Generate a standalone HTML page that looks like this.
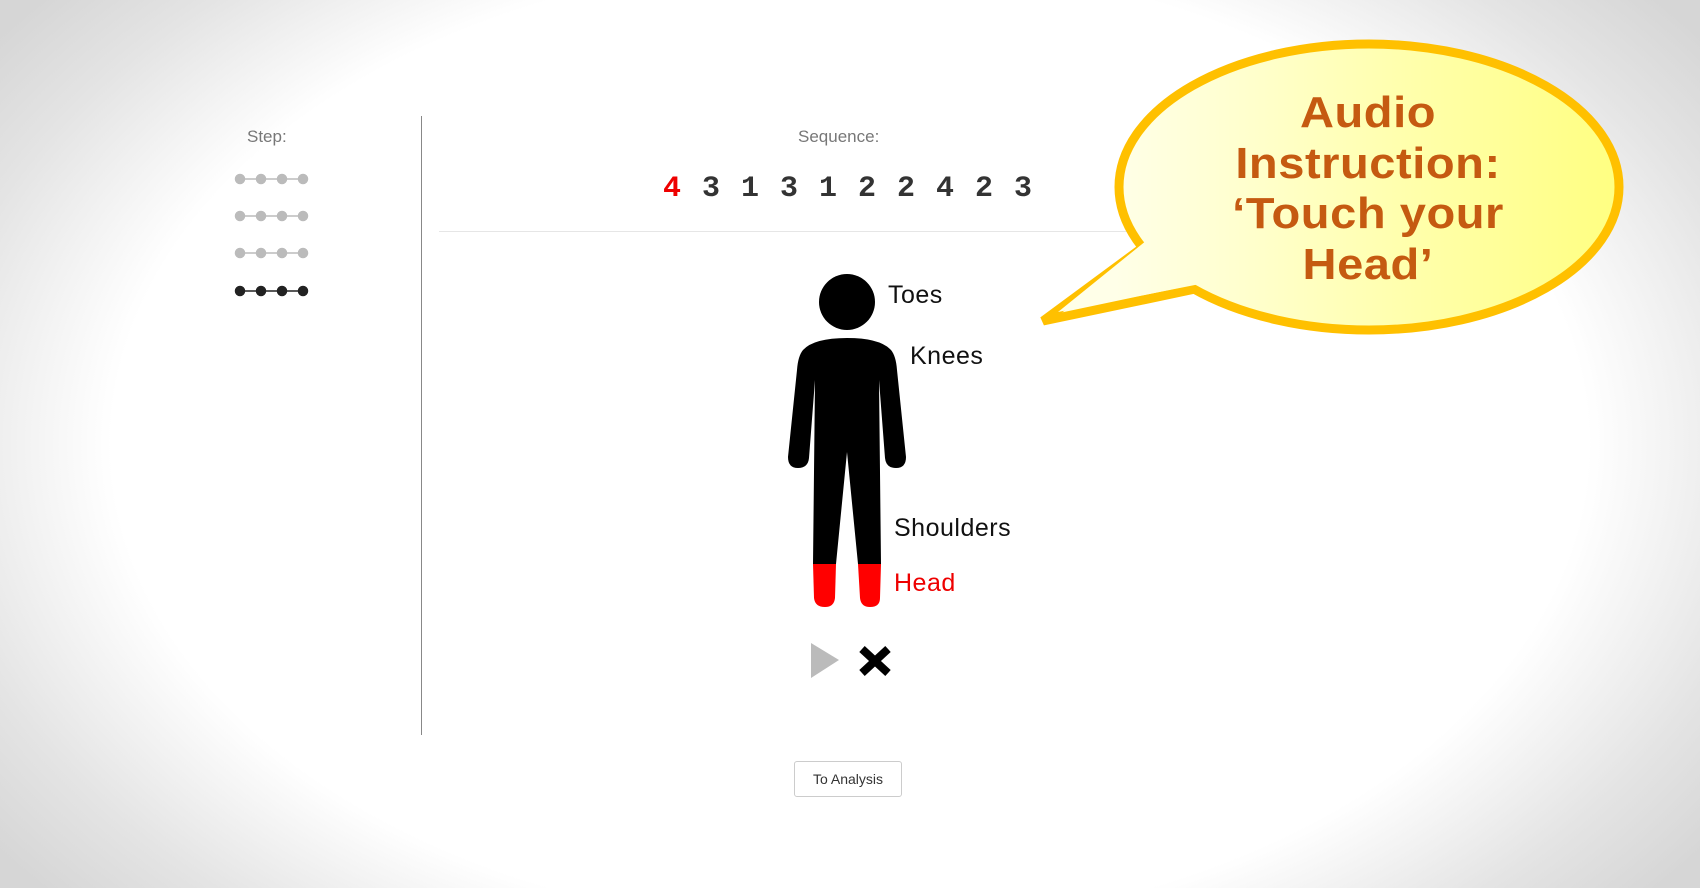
<!DOCTYPE html>
<html><head><style>
html,body{margin:0;padding:0}
body{width:1700px;height:888px;position:relative;overflow:hidden;font-family:"Liberation Sans",sans-serif;
background:radial-gradient(ellipse 62% 78% at 50% 50%,#fff 0%,#fff 70%,#e4e4e4 88%,#d6d6d6 100%);}
.a{position:absolute}
.lbl{color:#777;font-size:17px}
.dig{position:absolute;top:172px;font-family:"Liberation Mono",monospace;font-weight:bold;font-size:30px;color:#333}
.bl{position:absolute;font-size:25px;color:#111;letter-spacing:0.5px}
.bt{position:absolute;left:1130px;width:476px;text-align:center;font-weight:bold;font-size:44px;color:#c55a11;line-height:50.5px;transform:scaleX(1.07);letter-spacing:0.5px}
</style></head><body>
<div class="a lbl" style="left:247px;top:127px">Step:</div>
<svg class="a" style="left:230px;top:170px" width="84" height="130">
<g stroke-width="1.5">
<g stroke="#bbb" fill="#bbb">
<line x1="10" y1="9" x2="74" y2="9"/><circle cx="10" cy="9" r="4.5"/><circle cx="31" cy="9" r="4.5"/><circle cx="52" cy="9" r="4.5"/><circle cx="73" cy="9" r="4.5"/>
<line x1="10" y1="46" x2="74" y2="46"/><circle cx="10" cy="46" r="4.5"/><circle cx="31" cy="46" r="4.5"/><circle cx="52" cy="46" r="4.5"/><circle cx="73" cy="46" r="4.5"/>
<line x1="10" y1="83" x2="74" y2="83"/><circle cx="10" cy="83" r="4.5"/><circle cx="31" cy="83" r="4.5"/><circle cx="52" cy="83" r="4.5"/><circle cx="73" cy="83" r="4.5"/>
</g>
<g stroke="#222" fill="#222">
<line x1="10" y1="121" x2="74" y2="121"/><circle cx="10" cy="121" r="4.5"/><circle cx="31" cy="121" r="4.5"/><circle cx="52" cy="121" r="4.5"/><circle cx="73" cy="121" r="4.5"/>
</g></g></svg>
<div class="a" style="left:421px;top:116px;width:1px;height:619px;background:#888"></div>
<div class="a lbl" style="left:798px;top:127px">Sequence:</div>
<div class="dig" style="left:663px;color:#e00">4</div>
<div class="dig" style="left:702px">3</div>
<div class="dig" style="left:741px">1</div>
<div class="dig" style="left:780px">3</div>
<div class="dig" style="left:819px">1</div>
<div class="dig" style="left:858px">2</div>
<div class="dig" style="left:897px">2</div>
<div class="dig" style="left:936px">4</div>
<div class="dig" style="left:975px">2</div>
<div class="dig" style="left:1014px">3</div>
<div class="a" style="left:439px;top:231px;width:820px;height:1px;background:#e6e6e6"></div>
<svg class="a" style="left:780px;top:270px" width="140" height="345">
<circle cx="67" cy="32" r="28" fill="#000"/>
<path d="M67 68 Q100 68 111 80 Q116 86 117 100 L126 187 Q126 198 116 198 Q106 198 105 188 L99 110 L101 294 L78 294 L67 182 L56 294 L33 294 L35 110 L29 188 Q28 198 18 198 Q8 198 8 187 L17 100 Q18 86 23 80 Q34 68 67 68 Z" fill="#000"/>
<path d="M33 294 L56 294 L55 328 Q54 337 45 337 Q35 337 34 328 Z" fill="#f00"/>
<path d="M78 294 L101 294 L100 328 Q100 337 90 337 Q81 337 80 328 Z" fill="#f00"/>
</svg>
<div class="bl" style="left:888px;top:281px">Toes</div>
<div class="bl" style="left:910px;top:342px">Knees</div>
<div class="bl" style="left:894px;top:514px">Shoulders</div>
<div class="bl" style="left:894px;top:569px;color:#e00">Head</div>
<svg class="a" style="left:810px;top:642px" width="85" height="40">
<path d="M1 1 L29 18 L1 36 Z" fill="#bbb"/>
<path d="M52 7 L78 31 M78 7 L52 31" stroke="#000" stroke-width="8"/>
</svg>
<div class="a" style="left:794px;top:761px;width:106px;height:34px;border:1px solid #ccc;border-radius:3px;background:#fff;font-size:14px;color:#333;text-align:center;line-height:34px">To Analysis</div>
<svg class="a" style="left:0;top:0" width="1700" height="888">
<defs><linearGradient id="g" gradientUnits="userSpaceOnUse" x1="1115" y1="0" x2="1623" y2="0"><stop offset="0" stop-color="#ffffe8"/><stop offset="1" stop-color="#ffff80"/></linearGradient></defs>
<path d="M1146 245 L1043 321 L1200 288 Z" fill="url(#g)" stroke="#ffc000" stroke-width="9" stroke-linejoin="miter"/>
<ellipse cx="1369" cy="187" rx="250" ry="143" fill="url(#g)" stroke="#ffc000" stroke-width="9"/>
<path d="M1152 236 L1058 312 L1210 282 Z" fill="url(#g)"/>
</svg>
<div class="bt" style="top:88px">Audio<br>Instruction:<br>‘Touch your<br>Head’</div>
</body></html>
